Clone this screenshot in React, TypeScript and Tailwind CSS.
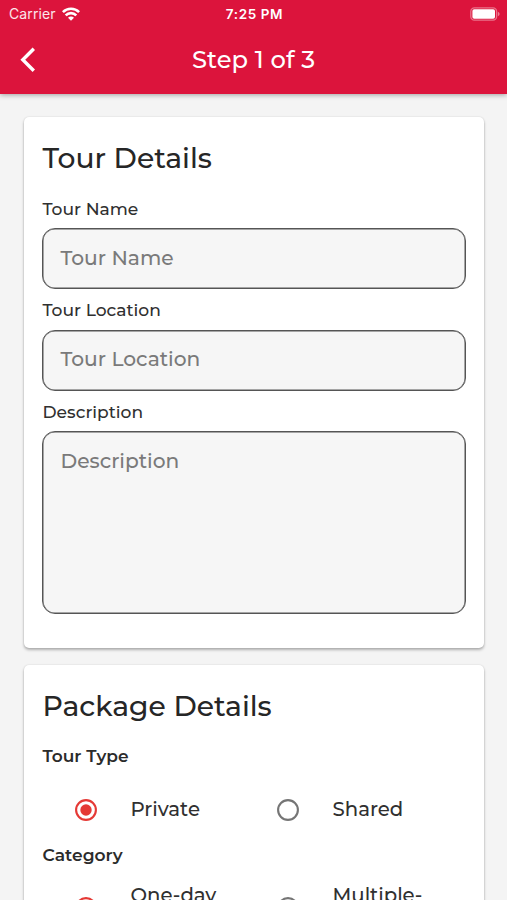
import React from "react";

function Title({ children }: { children: string }) {
  return (
    <h2 className="mb-[11px] h-9 whitespace-nowrap pl-px text-[28.2px] font-medium leading-9 text-[#262626]">{children}</h2>
  );
}

function Card({ children, className }: { children: React.ReactNode; className: string }) {
  return (
    <section
      className={`mx-auto w-[460px] shrink-0 rounded-[5px] bg-white px-[18px] pt-[22.5px] shadow-[0_2px_3px_rgba(0,0,0,0.28),0_0_2px_rgba(0,0,0,0.12)] ${className}`}
    >
      {children}
    </section>
  );
}

function Field({ label, boxClass }: { label: string; boxClass: string }) {
  return (
    <div>
      <div className="flex h-[40.5px] items-center whitespace-nowrap pl-px pt-[2px] text-[17.1px] font-medium text-[#303030]">
        {label}
      </div>
      <div
        className={`rounded-[13px] border border-[#555] bg-[#f6f6f6] px-[18px] pt-[13.5px] text-[20.2px] font-medium leading-[30px] text-[#7a7a7a] shadow-[inset_0_0_0_0.5px_#555] ${boxClass}`}
      >
        <span className="whitespace-nowrap">{label}</span>
      </div>
    </div>
  );
}

function Radio({ label, checked = false, tall = false }: { label: string; checked?: boolean; tall?: boolean }) {
  return (
    <div className="flex w-[202px] items-center pl-[33.5px]">
      <svg width="22" height="22" viewBox="0 0 22 22" className={checked ? "shrink-0 text-[#e53935]" : "shrink-0 text-[#757575]"}>
        <circle cx="11" cy="11" r="9.9" fill="none" stroke="currentColor" strokeWidth="2.1" />
        {checked && <circle cx="11" cy="11" r="5.7" fill="currentColor" />}
      </svg>
      <span className={`ml-[33.5px] whitespace-nowrap text-[19.7px] font-medium leading-[25px] text-[#303030] ${tall ? "h-[50px]" : ""}`}>
        {label}
      </span>
    </div>
  );
}

export default function App() {
  return (
    <div className="flex h-[900px] w-[507px] flex-col overflow-hidden bg-[#f4f4f4] font-['Montserrat','Inter',sans-serif]">
      <header className="z-10 h-[93.5px] shrink-0 bg-[#dc143c] text-white shadow-[0_1px_5px_rgba(0,0,0,0.35)]">
        <div className="grid h-[27px] grid-cols-3 items-center pl-[9px] pr-[7px] font-['Inter',sans-serif]">
          <div className="flex items-center gap-[6px]">
            <span className="text-[14px] leading-none tracking-[0.1px] text-white/90">Carrier</span>
            <svg width="18" height="14" viewBox="0 0 18 14" fill="none" stroke="white" strokeWidth="2.6">
              <path d="M0.9 5.1C5.4 0.6 12.6 0.6 17.1 5.1" />
              <path d="M3.7 8.4C6.7 5.4 11.3 5.4 14.3 8.4" />
              <path d="M6 10.8C7.6 9.1 10.4 9.1 12 10.8L9 13.8Z" fill="white" stroke="none" />
            </svg>
          </div>
          <div className="whitespace-nowrap pt-[2px] text-center text-[13.5px] font-semibold leading-none tracking-[0.6px]">7:25 PM</div>
          <svg className="justify-self-end" width="30" height="14" viewBox="0 0 30 14">
            <rect x="0.8" y="0.8" width="25.8" height="12.4" rx="3.6" fill="none" stroke="white" strokeOpacity="0.4" strokeWidth="1.3" />
            <rect x="2.4" y="2.3" width="22.6" height="9.4" rx="1.8" fill="white" />
            <path d="M27.9 4.8c2.2 1 2.2 3.4 0 4.4z" fill="white" fillOpacity="0.45" />
          </svg>
        </div>
        <div className="grid h-[66px] grid-cols-[100px_1fr_100px] items-center">
          <svg className="ml-[19.5px]" width="16" height="26" viewBox="0 0 16 26" fill="none" stroke="white" strokeWidth="3.4">
            <path d="M13.8 1.8L2.8 12.8L13.8 23.8" />
          </svg>
          <h1 className="whitespace-nowrap text-center text-[24.2px] font-medium leading-8 tracking-[0.1px]">Step 1 of 3</h1>
        </div>
      </header>

      <main className="flex flex-col gap-[17px] pt-[23.5px]">
        <Card className="h-[531px]">
          <Title>Tour Details</Title>
          <div className="pt-px">
            <Field label="Tour Name" boxClass="h-[61px]" />
            <Field label="Tour Location" boxClass="h-[61px]" />
            <Field label="Description" boxClass="h-[183px]" />
          </div>
        </Card>

        <Card className="h-[400px]">
          <Title>Package Details</Title>
          <h3 className="flex h-[42px] items-center pl-px pt-[2px] text-[17px] font-semibold text-[#2b2b2b]">Tour Type</h3>
          <div className="flex h-[66px] items-center">
            <Radio label="Private" checked />
            <Radio label="Shared" />
          </div>
          <h3 className="flex h-[25px] items-center pl-px text-[17.1px] font-semibold text-[#2b2b2b]">Category</h3>
          <div className="flex h-[81px] items-center">
            <Radio label="One-day" checked tall />
            <Radio label="Multiple-" tall />
          </div>
        </Card>
      </main>
    </div>
  );
}
